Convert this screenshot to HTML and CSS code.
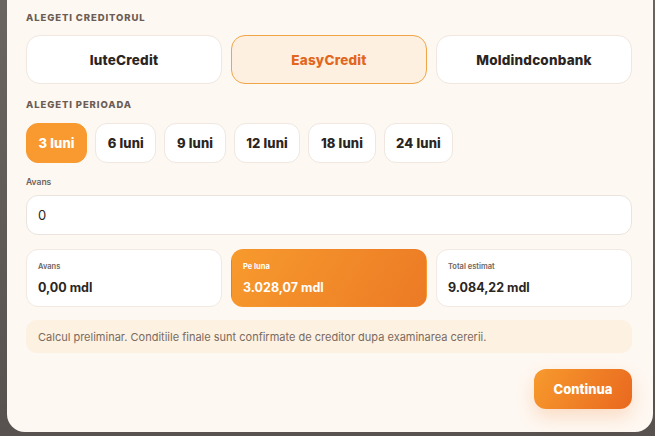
FILE: index.html
```html
<!DOCTYPE html>
<html lang="ro">
<head>
<meta charset="utf-8">
<title>Credit</title>
<link rel="stylesheet" href="styles.css">
</head>
<body>
<div class="modal">
  <div class="section-label">ALEGETI CREDITORUL</div>
  <div class="creditors">
    <button class="creditor">IuteCredit</button>
    <button class="creditor active">EasyCredit</button>
    <button class="creditor">Moldindconbank</button>
  </div>
  <div class="section-label second">ALEGETI PERIOADA</div>
  <div class="periods">
    <button class="chip active">3 luni</button>
    <button class="chip">6 luni</button>
    <button class="chip">9 luni</button>
    <button class="chip">12 luni</button>
    <button class="chip">18 luni</button>
    <button class="chip">24 luni</button>
  </div>
  <div class="field-label">Avans</div>
  <div class="input">0</div>
  <div class="cards">
    <div class="card">
      <div class="card-label">Avans</div>
      <div class="card-value">0,00 mdl</div>
    </div>
    <div class="card highlight">
      <div class="card-label">Pe luna</div>
      <div class="card-value">3.028,07 mdl</div>
    </div>
    <div class="card">
      <div class="card-label">Total estimat</div>
      <div class="card-value">9.084,22 mdl</div>
    </div>
  </div>
  <div class="note">Calcul preliminar. Conditiile finale sunt confirmate de creditor dupa examinarea cererii.</div>
  <div class="actions">
    <button class="continue">Continua</button>
  </div>
</div>
</body>
</html>
```
FILE: styles.css
```css
* { box-sizing: border-box; }
html, body { margin: 0; padding: 0; }
body {
  width: 655px;
  height: 436px;
  overflow: hidden;
  background: linear-gradient(180deg, #6a6561 0%, #5e5955 60%, #57524f 100%);
  font-family: "Inter", "Lato", sans-serif;
}
.modal {
  margin-left: 7px;
  width: 646px;
  height: 432px;
  background: #fef8f2;
  border-radius: 0 0 18px 18px;
  padding: 12px 21px 0 19px;
  display: flex;
  flex-direction: column;
}
.section-label {
  font-size: 9.5px;
  line-height: 12px;
  font-weight: 800;
  letter-spacing: 0.9px;
  color: #6b5d55;
}
.section-label.second { margin-top: 15px; }
.creditors {
  margin-top: 11px;
  display: grid;
  grid-template-columns: repeat(3, 1fr);
  gap: 9px;
}
button {
  font-family: inherit;
  cursor: pointer;
}
.creditor {
  height: 49px;
  border: 1px solid #efe7e0;
  background: #ffffff;
  border-radius: 14px;
  font-size: 13.5px;
  font-weight: 800;
  letter-spacing: 0.2px;
  color: #2b2522;
}
.creditor.active {
  background: #fdf0e0;
  border-color: #f1a546;
  color: #e2661d;
}
.periods {
  margin-top: 12px;
  display: flex;
  gap: 8px;
}
.chip {
  height: 40px;
  padding: 0 11.5px;
  border: 1px solid #efe7e0;
  background: #ffffff;
  border-radius: 12px;
  font-size: 13px;
  font-weight: 800;
  letter-spacing: 0.15px;
  color: #2b2522;
}
.chip.active {
  background: #f89a30;
  border-color: #f89a30;
  color: #ffffff;
}
.field-label {
  margin-top: 13px;
  font-size: 8.5px;
  line-height: 12px;
  font-weight: 600;
  color: #6d625c;
}
.input {
  margin-top: 7px;
  height: 40px;
  border: 1px solid #ebe4de;
  background: #ffffff;
  border-radius: 12px;
  padding: 0 11px;
  display: flex;
  align-items: center;
  font-size: 13px;
  color: #2b2522;
}
.cards {
  margin-top: 14px;
  display: grid;
  grid-template-columns: repeat(3, 1fr);
  gap: 9px;
}
.card {
  height: 58px;
  border: 1px solid #f1e9e2;
  background: #ffffff;
  border-radius: 12px;
  padding: 12px 11px 0;
}
.card-label {
  font-size: 7.5px;
  line-height: 10px;
  font-weight: 600;
  color: #6e645e;
}
.card-value {
  margin-top: 8px;
  font-size: 12.5px;
  line-height: 15px;
  font-weight: 700;
  color: #2b2522;
}
.card.highlight {
  background: linear-gradient(120deg, #f79a2d 0%, #ec7a25 100%);
  border-color: transparent;
}
.card.highlight .card-label,
.card.highlight .card-value { color: #ffffff; }
.card.highlight .card-label { font-weight: 700; }
.note {
  margin-top: 13px;
  height: 33px;
  background: #fdf1e1;
  border-radius: 11px;
  padding: 0 12px;
  display: flex;
  align-items: center;
  font-size: 11px;
  color: #7a6a5f;
}
.actions {
  margin-top: 16px;
  display: flex;
  justify-content: flex-end;
}
.continue {
  width: 98px;
  height: 40px;
  border: none;
  border-radius: 12px;
  background: linear-gradient(120deg, #f79a2d 0%, #e9681f 100%);
  color: #ffffff;
  font-size: 13px;
  font-weight: 800;
  box-shadow: 0 8px 18px rgba(236, 122, 37, 0.22);
}
```
